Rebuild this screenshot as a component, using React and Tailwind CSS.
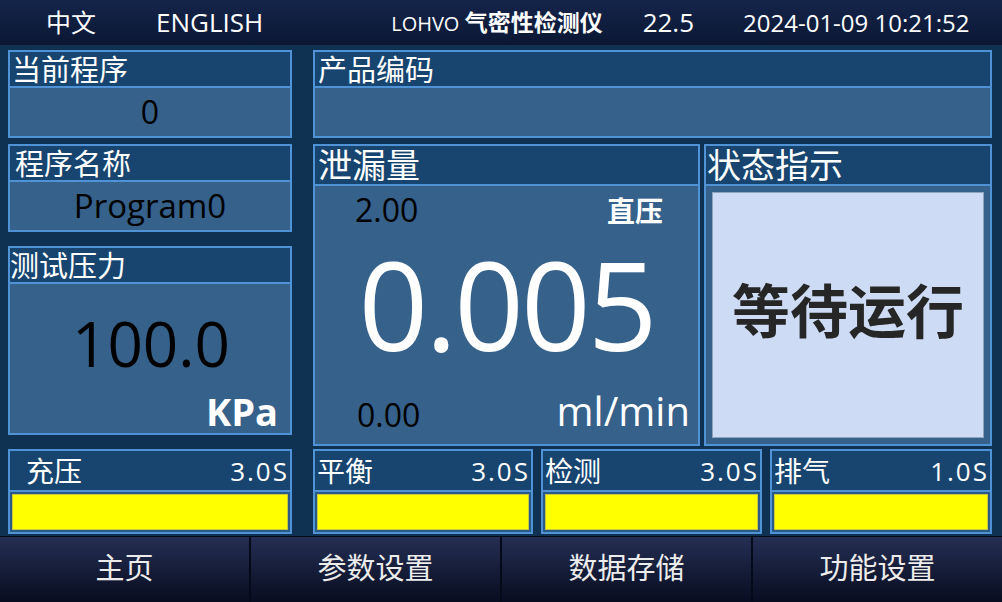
import React from 'react'

const panelBorder = 'border-2 border-[#4f93d6]'

function Panel({ title, className = '', headClass = 'h-[36px] text-[29px] pl-[2px]', bodyClass = '', children }) {
  return (
    <div className={`flex flex-col ${panelBorder} bg-[#35618b] ${className}`}>
      <div className={`flex items-center bg-[#174570] text-white border-b-2 border-[#4f93d6] leading-none ${headClass}`}>
        {title}
      </div>
      <div className={`flex-1 min-h-0 ${bodyClass}`}>{children}</div>
    </div>
  )
}

function Stage({ name, time, className = '', nameClass = 'pl-[2px]' }) {
  return (
    <div className={`flex flex-col ${panelBorder} bg-[#2c5a86] ${className}`}>
      <div className="h-[41px] flex items-center justify-between bg-[#174570] border-b-2 border-[#4f93d6] text-white text-[28px] leading-none pr-[1px]">
        <span className={nameClass}>{name}</span>
        <span className="text-[26px] tracking-[2px]">{time}</span>
      </div>
      <div className="flex-1 p-[2px]">
        <div className="h-full bg-[#ffff00] border border-[#c8c840]" />
      </div>
    </div>
  )
}

export default function App() {
  const navs = ['主页', '参数设置', '数据存储', '功能设置']
  return (
    <div className="w-[1002px] h-[602px] overflow-hidden flex flex-col bg-[#0f3152] font-['Open_Sans','Noto_Sans_CJK_SC',sans-serif]">
      {/* 顶栏 */}
      <div className="h-[45px] shrink-0 flex items-center bg-gradient-to-b from-[#14244a] to-[#0b1733] text-white">
        <span className="ml-[46px] text-[25px]">中文</span>
        <span className="ml-[60px] text-[26px]">ENGLISH</span>
        <span className="ml-[128px] text-[20px]">LOHVO <b className="font-bold text-[23px]">气密性检测仪</b></span>
        <span className="ml-[40px] text-[26px]">22.5</span>
        <span className="ml-[49px] text-[24px]">2024-01-09 10:21:52</span>
      </div>

      {/* 主体 */}
      <div className="flex-1 flex flex-col pt-[5px] px-[8px]">
        <div className="flex gap-[21px]">
          <div className="w-[284px] flex flex-col">
            <Panel title="当前程序" className="h-[88px]" bodyClass="flex items-center justify-center text-[32px] text-black">
              0
            </Panel>
            <Panel title="程序名称" className="h-[88px] mt-[6px]" headClass="h-[36px] text-[29px] pl-[5px]" bodyClass="flex items-center justify-center text-[33px] text-black">
              Program0
            </Panel>
            <Panel title="测试压力" className="h-[189px] mt-[14px]" headClass="h-[36px] text-[29px] pl-[0px]" bodyClass="flex flex-col text-black">
              <div className="flex-1 flex items-center justify-center text-[62px] leading-none pt-[10px] pl-[2px]">100.0</div>
              <div className="text-right pr-[12px] pb-[3px] text-white font-bold text-[38px] leading-none">KPa</div>
            </Panel>
          </div>

          <div className="w-[679px] flex flex-col">
            <Panel title="产品编码" className="h-[88px]" headClass="h-[36px] text-[29px] pl-[3px]" />
            <div className="flex gap-[4px] mt-[6px] h-[302px]">
              <Panel title="泄漏量" className="w-[387px]" headClass="h-[40px] text-[34px] pl-[3px]" bodyClass="flex flex-col">
                <div className="flex justify-between items-start pt-[8px] pl-[40px] pr-[35px]">
                  <span className="text-black text-[32px] leading-none">2.00</span>
                  <span className="text-white text-[28px] font-bold leading-none mt-[3px]">直压</span>
                </div>
                <div className="flex-1 flex items-center justify-center text-white text-[122px] leading-none tracking-[-3px] pb-[10px]">0.005</div>
                <div className="flex justify-between items-end pb-[13px] pl-[42px] pr-[8px]">
                  <span className="text-black text-[32px] leading-none">0.00</span>
                  <span className="text-white text-[40px] leading-none">ml/min</span>
                </div>
              </Panel>
              <Panel title="状态指示" className="w-[288px]" headClass="h-[40px] text-[34px] pl-[1px]" bodyClass="p-[6px]">
                <div className="h-full bg-[#cddcf4] border border-[#8fa4bf] flex items-center justify-center text-[#262626] text-[58px] font-bold leading-none pb-[8px]">
                  等待运行
                </div>
              </Panel>
            </div>
          </div>
        </div>

        <div className="flex mt-[3px] h-[85px]">
          <Stage name="充压" time="3.0S" className="w-[284px]" nameClass="pl-[16px]" />
          <Stage name="平衡" time="3.0S" className="w-[220px] ml-[21px]" />
          <Stage name="检测" time="3.0S" className="w-[221px] ml-[8px]" />
          <Stage name="排气" time="1.0S" className="w-[222px] ml-[8px]" />
        </div>
      </div>

      {/* 底部导航 */}
      <div className="h-[66px] shrink-0 flex gap-[2px] bg-[#050a18] pt-[1px]">
        {navs.map((n) => (
          <div key={n} className="flex-1 flex items-center justify-center bg-gradient-to-b from-[#252f54] to-[#080d20] text-[#ececec] text-[29px] pb-[4px]">
            {n}
          </div>
        ))}
      </div>
    </div>
  )
}
